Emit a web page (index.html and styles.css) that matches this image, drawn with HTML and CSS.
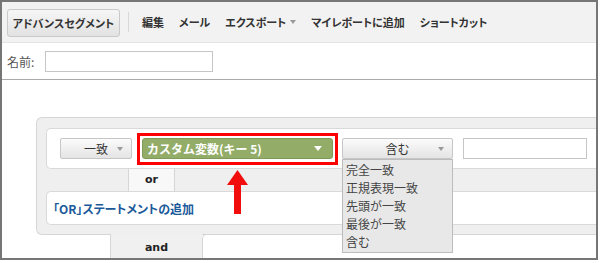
FILE: index.html
```html
<!DOCTYPE html>
<html lang="ja">
<head>
<meta charset="UTF-8" />
<title>アドバンスセグメント</title>
<link rel="stylesheet" href="styles.css">
</head>
<body>
<div class="frame">

  <!-- toolbar -->
  <div class="toolbar">
    <span class="tb-btn">アドバンスセグメント</span>
    <span class="tb-sep"></span>
    <span class="tb-item">編集</span>
    <span class="tb-item">メール</span>
    <span class="tb-item">エクスポート <i class="caret"></i></span>
    <span class="tb-item">マイレポートに追加</span>
    <span class="tb-item">ショートカット</span>
  </div>

  <!-- name -->
  <div class="name-row">
    <label>名前:</label>
    <span class="field name-field"></span>
  </div>

  <!-- segment panel -->
  <div class="panel">
    <div class="cond">
      <span class="btn btn-match"><b>一致</b><i class="caret"></i></span>
      <span class="highlight">
        <span class="green-sel"><b>カスタム変数(キー 5)</b><i class="caret white"></i></span>
      </span>
      <span class="sel">
        <span class="btn btn-op"><b>含む</b><i class="caret"></i></span>
        <ul class="menu">
          <li>完全一致</li>
          <li>正規表現一致</li>
          <li>先頭が一致</li>
          <li>最後が一致</li>
          <li>含む</li>
        </ul>
      </span>
      <span class="field val-field"></span>
    </div>

    <div class="or-row">
      <span class="or-tab">or</span>
    </div>

    <div class="or-box">
      <a class="add-or">「OR」ステートメントの追加</a>
    </div>

    <svg class="arrow" width="21" height="44" viewBox="0 0 21 44">
      <polygon points="10.5,0 21,15 0,15" fill="#f20d0d" />
      <rect x="7" y="14" width="7" height="30" fill="#f20d0d" />
    </svg>
  </div>

  <div class="and-row">
    <span class="and-tab">and</span>
    <span class="next-box"></span>
  </div>

</div>
</body>
</html>
```

FILE: styles.css
```css
* {
  margin: 0; padding: 0; box-sizing: border-box;
}
body {
  background: #fff;
  font-family: "Noto Sans CJK JP", sans-serif;
  color: #333;
}
.frame {
  width: 598px;
  height: 260px;
  border: 2px solid #767676;
  overflow: hidden;
  background: #fff;
}

/* toolbar */
.toolbar {
  height: 41px;
  background: #f2f2f2;
  border-bottom: 1px solid #e4e4e4;
  display: flex;
  align-items: center;
  padding-left: 5px;
  font-size: 11px;
  font-weight: bold;
  font-feature-settings: "palt";
  color: #333;
}
.tb-btn {
  height: 28px;
  width: 113px;
  display: flex;
  align-items: center;
  justify-content: center;
  border: 1px solid #c9c9c9;
  border-radius: 3px;
  background: linear-gradient(#f6f6f6, #e2e2e2);
  margin-top: 1px;
}
.tb-sep {
  width: 1px;
  height: 20px;
  background: #d8d8d8;
  margin: 0 13px 0 8px;
}
.tb-item {
  margin-right: 15px;
  display: flex;
  align-items: center;
}
.tb-item .caret {
  margin-left: 4px;
}

.caret {
  display: inline-block;
  width: 0;
  height: 0;
  border-left: 3px solid transparent;
  border-right: 3px solid transparent;
  border-top: 4px solid #999;
}
.caret.white {
  border-left-width: 4px;
  border-right-width: 4px;
  border-top: 5px solid #fff;
}

/* name row */
.name-row {
  height: 37px;
  display: flex;
  align-items: center;
  padding-left: 5px;
  border-bottom: 1px solid #a9a9a9;
  font-size: 12px;
  color: #555;
}
.name-row label {
  width: 38px;
}
.field {
  display: block;
  height: 21px;
  background: #fff;
  border: 1px solid #c6c6c6;
}
.name-field {
  width: 168px;
  margin-top: 1px;
}

/* panel */
.panel {
  position: relative;
  margin: 37px 0 0 34px;
  background: #efefef;
  border: 1px solid #d6d6d6;
  border-right: none;
  border-radius: 6px 0 0 6px;
  padding: 10px 0 9px 9px;
}
.cond {
  height: 41px;
  background: #fff;
  border: 1px solid #d9d9d9;
  border-right: none;
  border-radius: 5px 0 0 5px;
  display: flex;
  align-items: center;
  padding-left: 13px;
}
.btn {
  height: 21px;
  display: grid;
  grid-template-columns: 1fr auto 1fr;
  align-items: center;
  border: 1px solid #c6c6c6;
  border-radius: 2px;
  background: linear-gradient(#fbfbfb, #e4e4e4);
  font-size: 12px;
  color: #333;
  padding-right: 8px;
}
.btn b {
  grid-column: 2;
  font-weight: normal;
}
.btn .caret {
  grid-column: 3;
  justify-self: end;
}
.btn-match {
  width: 72px;
  padding-left: 8px;
}
.highlight {
  border: 3px solid #f00;
  padding: 2px 2px 3px;
  margin: -5px 0 -5px 5px;
}
.green-sel {
  width: 191px;
  height: 21px;
  display: flex;
  align-items: center;
  justify-content: space-between;
  padding: 0 10px 0 4px;
  background: #93ad69;
  border: 1px solid #7f9a57;
  border-radius: 3px;
  color: #fff;
  font-size: 12px;
}
.green-sel b {
  font-weight: bold;
}
.sel {
  position: relative;
  margin-left: 4px;
}
.btn-op {
  width: 111px;
  padding-left: 8px;
}
.menu {
  position: absolute;
  top: 21px;
  left: 0;
  width: 111px;
  list-style: none;
  background: #e8e8e8;
  border: 1px solid #bcbcbc;
  padding: 1px 3px;
  font-size: 12px;
  line-height: 18px;
  color: #444;
  z-index: 2;
}
.val-field {
  width: 124px;
  margin-left: 10px;
}

.or-row {
  height: 22px;
  display: flex;
  padding-left: 82px;
}
.or-tab {
  width: 47px;
  background: #f8f8f8;
  border-left: 1px solid #d6d6d6;
  border-right: 1px solid #d6d6d6;
  text-align: center;
  font-family: "DejaVu Sans", sans-serif;
  font-weight: bold;
  font-size: 11px;
  line-height: 22px;
  color: #222;
}
.or-box {
  height: 34px;
  background: #fff;
  border: 1px solid #d9d9d9;
  border-right: none;
  border-radius: 5px 0 0 5px;
  padding-left: 6px;
  display: flex;
  align-items: center;
}
.add-or {
  color: #1b5a9a;
  font-size: 12px;
  font-weight: bold;
  font-feature-settings: "palt";
}
.arrow {
  position: absolute;
  left: 190px;
  top: 52px;
}

.and-row {
  display: flex;
  height: 30px;
  margin-top: -1px;
  padding-left: 108px;
  position: relative;
}
.and-tab {
  width: 92px;
  background: #f0f0f0;
  border-left: 1px solid #d6d6d6;
  text-align: center;
  font-family: "DejaVu Sans", sans-serif;
  font-weight: bold;
  font-size: 11px;
  line-height: 28px;
  color: #222;
}
.next-box {
  flex: 1;
  background: #fff;
  border-top: 1px solid #d6d6d6;
  border-left: 1px solid #d6d6d6;
  border-radius: 5px 0 0 0;
}
```
